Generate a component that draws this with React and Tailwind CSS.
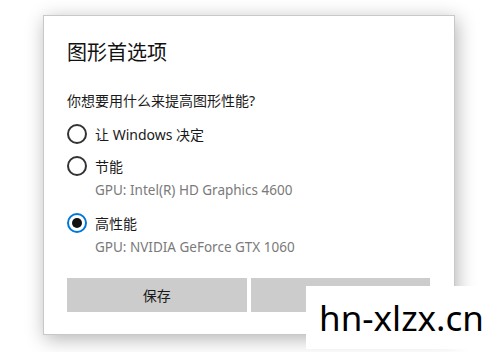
import React from "react";

const font = { fontFamily: '"Noto Sans", "Noto Sans CJK SC", sans-serif' };

const Radio = ({ checked }) =>
  checked ? (
    <span className="flex h-[20px] w-[20px] shrink-0 items-center justify-center rounded-full border-2 border-[#0078d7]">
      <span className="h-[10px] w-[10px] rounded-full bg-[#111]" />
    </span>
  ) : (
    <span className="h-[20px] w-[20px] shrink-0 rounded-full border-2 border-[#333]" />
  );

const Option = ({ label, gpu, checked }) => (
  <div className="flex flex-col">
    <div className="flex items-center gap-[8px] h-[24px]">
      <Radio checked={checked} />
      <span className="text-[14px] text-[#1a1a1a]">{label}</span>
    </div>
    {gpu && <div className="pl-[28px] h-[25px] leading-[25px] text-[13.5px] text-[#7a7a7a]">{gpu}</div>}
  </div>
);

export default function App() {
  return (
    <div className="relative h-[352px] w-[500px] overflow-hidden bg-white" style={font}>
      <div className="ml-[43px] mt-[15px] flex h-[320px] w-[412px] flex-col border border-[#c8c8c8] bg-white px-[23px] shadow-[2px_4px_18px_rgba(0,0,0,0.3)]">
        <h1 className="mt-[24px] text-[20px] leading-[26px] text-[#111]">图形首选项</h1>
        <p className="mt-[25px] text-[14px] leading-[20px] text-[#1a1a1a]">你想要用什么来提高图形性能?</p>
        <div className="mt-[11px] flex flex-col gap-[8px]">
          <Option label="让 Windows 决定" />
          <Option label="节能" gpu="GPU: Intel(R) HD Graphics 4600" />
          <Option label="高性能" gpu="GPU: NVIDIA GeForce GTX 1060" checked />
        </div>
        <div className="mt-[18px] flex gap-[4px] pr-[1px]">
          <button className="h-[34px] flex-1 bg-[#cccccc] text-[14px] text-[#1a1a1a]">保存</button>
          {/* label of this button is hidden under the watermark */}
          <button className="h-[34px] flex-1 bg-[#cccccc]" aria-label="取消" />
        </div>
      </div>
      <div className="absolute left-[306px] top-[286px] flex h-[63px] w-[191px] items-center justify-center bg-white">
        <span className="text-[35px] leading-none text-black" style={{ fontFamily: '"Noto Sans", sans-serif' }}>hn-xlzx.cn</span>
      </div>
    </div>
  );
}
